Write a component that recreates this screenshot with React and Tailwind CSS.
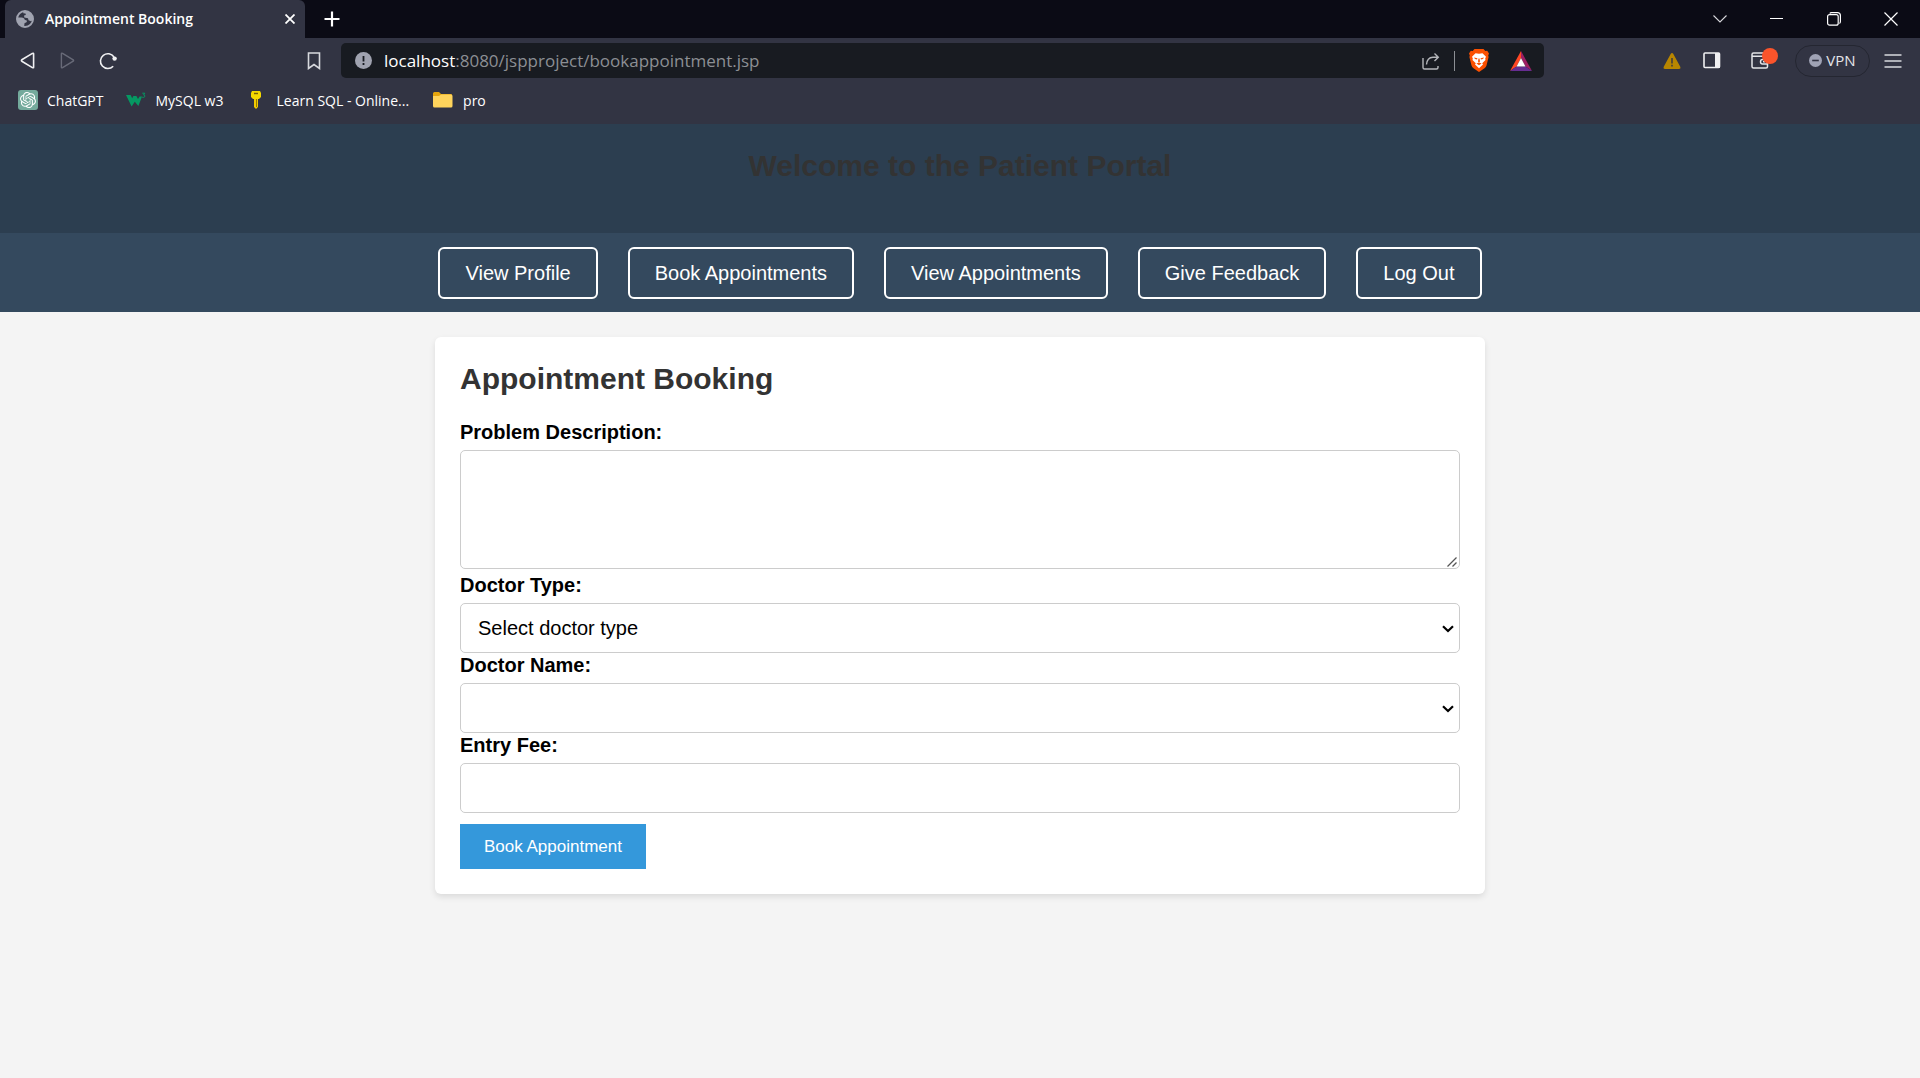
import React from "react";
import { SiOpenai } from "react-icons/si";

const navItems = ["View Profile", "Book Appointments", "View Appointments", "Give Feedback", "Log Out"];
const iconButton = "flex h-8 w-8 shrink-0 items-center justify-center";
const field = "block w-full rounded-[5px] border border-[#cccccc] bg-white px-[17px] text-[20px] text-black";
const label = "mb-1.5 block text-[20px] leading-6 font-bold text-black";

function Globe() {
  return (
    <svg width="18" height="18" viewBox="0 0 18 18" className="shrink-0">
      <circle cx="9" cy="9" r="8" fill="#323443" stroke="#a0a3b0" strokeWidth="2" />
      <path d="M1.2 7.5H5.5Q8.5 7.5 8.8 10L10.5 10.2Q11.5 11.5 10.2 12.6L8.6 13 8 17A8 8 0 0 1 1.2 8ZM7.5 1.2 14 2.3 16.8 6.5 16.9 10 15 11.2 12.5 10.2 12 8.2 8.3 7.6 8 5.6 9.8 5 9.5 3.6 7.2 3.2Z" fill="#a0a3b0" />
    </svg>
  );
}

function TabStrip() {
  return (
    <div className="flex h-[38px] bg-[#0b0b15] pl-[5px] text-white">
      <div className="flex w-[300px] items-center rounded-t-[6px] bg-[#323443] pr-1.5 pb-px pl-[11px]">
        <Globe />
        <span className="ml-[11px] grow text-[14px] font-semibold whitespace-nowrap">Appointment Booking</span>
        <button aria-label="Close tab" className="flex h-6 w-[18px] items-center justify-center">
          <svg width="10" height="10" viewBox="0 0 10 10" stroke="white" strokeWidth="1.8"><path d="M0.5 0.5 9.5 9.5M9.5 0.5 0.5 9.5" /></svg>
        </button>
      </div>
      <button aria-label="New tab" className="ml-[11px] flex w-8 items-center justify-center pb-px">
        <svg width="16" height="16" viewBox="0 0 16 16" stroke="white" strokeWidth="2.2"><path d="M8 0.5V15.5M0.5 8H15.5" /></svg>
      </button>
      <div className="ml-auto flex pr-px pb-px">
        <button aria-label="Search tabs" className="flex w-[57px] items-center justify-center">
          <svg width="14" height="8" viewBox="0 0 14 8" fill="none" stroke="#d8d8dc" strokeWidth="1.1"><path d="M0.5 0.5 7 7 13.5 0.5" /></svg>
        </button>
        <button aria-label="Minimize" className="flex w-[57px] items-center justify-center"><span className="h-px w-[13px] bg-white" /></button>
        <button aria-label="Restore" className="flex w-[57px] items-center justify-center">
          <svg width="14" height="14" viewBox="0 0 14 14" fill="none" stroke="white" strokeWidth="1.2"><rect x="0.6" y="2.6" width="10.6" height="10.6" rx="2" /><path d="M2.8 1.4Q3.2 0.6 4.5 0.6H10.4Q13.4 0.6 13.4 3.6V9.5Q13.4 11 12.4 11.5" /></svg>
        </button>
        <button aria-label="Close" className="flex w-[57px] items-center justify-center">
          <svg width="14" height="14" viewBox="0 0 14 14" stroke="white" strokeWidth="1.2"><path d="M0.5 0.5 13.5 13.5M13.5 0.5 0.5 13.5" /></svg>
        </button>
      </div>
    </div>
  );
}

function Lion() {
  return (
    <svg width="20" height="23" viewBox="0 0 20 23">
      <path d="M5.5 0H14.5L16.3 2 18.2 1.8 20 4.5 19.2 6.5 19.6 8 17.5 16.5Q17 18.2 15.5 19.3L10.8 22.6Q10 23.2 9.2 22.6L4.5 19.3Q3 18.2 2.5 16.5L.4 8 .8 6.5 0 4.5 1.8 1.8 3.7 2Z" fill="#fb5000" />
      <path d="M6.5 4.2 10 4.8 13.5 4.2 17 7.8 16.2 9.5 16.5 11 13.2 14.2 14 15.6 10 19.2 6 15.6 6.8 14.2 3.5 11 3.8 9.5 3 7.8Z" fill="white" />
      <path d="M5 8.4 8.5 9.2 8 10.4 6 9.9ZM15 8.4 11.5 9.2 12 10.4 14 9.9ZM9.5 9.5H10.5L11 12.5 10 13.5 9 12.5ZM7.4 14.6 10 13.6 12.6 14.6 10 16.2Z" fill="#fb5000" />
    </svg>
  );
}

function Toolbar() {
  return (
    <div className="flex h-[45px] items-center pr-[18px] pl-[11px]">
      <button aria-label="Back" className={iconButton}>
        <svg width="15" height="17" viewBox="0 0 15 17" fill="none" stroke="#f0f0f2" strokeWidth="1.6" strokeLinejoin="round"><path d="M13.6 1.8V15.2Q13.6 16.2 12.4 15.6L1.8 9.2Q1 8.5 1.8 7.8L12.4 1.4Q13.6 0.8 13.6 1.8Z" /></svg>
      </button>
      <button aria-label="Forward" className="ml-2 flex h-8 w-8 shrink-0 items-center justify-center">
        <svg width="15" height="17" viewBox="0 0 15 17" fill="none" stroke="#686a78" strokeWidth="1.4" strokeLinejoin="round"><path d="M1.4 1.8V15.2Q1.4 16.2 2.6 15.6L13.2 9.2Q14 8.5 13.2 7.8L2.6 1.4Q1.4 0.8 1.4 1.8Z" /></svg>
      </button>
      <button aria-label="Reload" className="ml-[9px] flex h-8 w-8 shrink-0 items-center justify-center">
        <svg width="18" height="18" viewBox="0 0 18 18" fill="none" stroke="#f0f0f2" strokeWidth="1.6"><path d="M14.2 14.2A7.4 7.4 0 1 1 15 5" /><circle cx="15.6" cy="6.6" r="2.2" fill="#f0f0f2" stroke="none" /></svg>
      </button>
      <button aria-label="Bookmark" className="ml-[174px] flex h-8 w-8 shrink-0 items-center justify-center">
        <svg width="14" height="18" viewBox="0 0 14 18" fill="none" stroke="#d8d9de" strokeWidth="1.6"><path d="M1.5 1H12.5V16.5L7 12.5 1.5 16.5Z" /></svg>
      </button>
      <div className="ml-[11px] flex h-[35px] w-[1203px] min-w-0 items-center rounded-[5px] bg-[#181b21] pr-3 pl-3.5">
        <svg width="17" height="17" viewBox="0 0 17 17" className="shrink-0"><circle cx="8.5" cy="8.5" r="8.5" fill="#a0a3b0" /><path d="M8.5 4V9.5M8.5 11V13" stroke="#181b21" strokeWidth="1.8" /></svg>
        <span className="ml-3 grow truncate text-[17px] text-[#8c8f94]"><span className="text-white">localhost</span>:8080/jspproject/bookappointment.jsp</span>
        <button aria-label="Share" className="shrink-0">
          <svg width="18" height="18" viewBox="0 0 18 18" fill="none" stroke="#b4b6ba" strokeWidth="1.4"><path d="M1 6V15.5Q1 17 2.5 17H14.5Q16 17 16 15.5V14M4.5 12.5Q5 5.5 11 5.2H16M12.5 1.5 16.3 5.2 12.5 9" /></svg>
        </button>
        <span className="ml-3.5 h-5 w-px shrink-0 bg-[#8c8f94]" />
        <button aria-label="Brave Shields" className="ml-3.5 shrink-0"><Lion /></button>
        <button aria-label="Rewards" className="ml-[21px] shrink-0">
          <svg width="22" height="20" viewBox="0 0 22 20"><path d="M11 0 0 20 6.5 15.5 11 7Z" fill="#ff4724" /><path d="M11 0 22 20 15.5 15.5 11 7Z" fill="#9e1f63" /><path d="M0 20H22L15.5 15.5H6.5Z" fill="#662d91" /><path d="M11 7 15.5 15.5H6.5Z" fill="white" /></svg>
        </button>
      </div>
      <div className="ml-auto flex shrink-0 items-center">
        <svg width="18" height="16" viewBox="0 0 18 16"><path d="M9 0Q9.8 0 10.2 .8L17.4 14Q18 16 16 16H2Q0 16 .6 14L7.8 .8Q8.2 0 9 0Z" fill="#b88600" /><path d="M9 5V10.5M9 11.8V13.5" stroke="#323443" strokeWidth="1.4" /></svg>
        <button aria-label="Sidebar" className="ml-[22px]">
          <svg width="18" height="17" viewBox="0 0 18 17"><rect x="1" y="1" width="15.5" height="14.5" rx="1" fill="none" stroke="#f0f0f2" strokeWidth="1.6" /><path d="M12 1H17V16H12Z" fill="#f0f0f2" /></svg>
        </button>
        <button aria-label="Wallet" className="relative mr-2 ml-[30px]">
          <svg width="18" height="17" viewBox="0 0 18 17" fill="none" stroke="#e4e5e9" strokeWidth="1.5"><path d="M16.5 4.5V2.5Q16.5 1 15 1H2.5Q1 1 1 2.5V14.5Q1 16 2.5 16H15Q16.5 16 16.5 14.5V12M1 4.2H14.5Q16.5 4.5 16.5 6V12H11.5Q9.5 12 9.5 9.7 9.5 7.5 11.5 7.5H16.5" /><path d="M12 9.8H14" /></svg>
          <span className="absolute -top-1 left-[11px] h-4 w-4 rounded-full bg-[#fb542b]" />
        </button>
        <button className="ml-[18px] flex h-8 w-[75px] items-center justify-center gap-1 rounded-full border border-[#242631] text-[15px] text-[#e4e5e9]">
          <svg width="13" height="13" viewBox="0 0 13 13"><circle cx="6.5" cy="6.5" r="6.5" fill="#a0a3b5" /><path d="M3.2 6.5H9.8" stroke="#323443" strokeWidth="1.6" /></svg>
          VPN
        </button>
        <button aria-label="Menu" className="ml-3.5">
          <svg width="18" height="14" viewBox="0 0 18 14" stroke="#d8d9de" strokeWidth="1.4"><path d="M0.5 1H17.5M0.5 7H17.5M0.5 13H17.5" /></svg>
        </button>
      </div>
    </div>
  );
}

function Bookmarks() {
  return (
    <div className="flex h-[41px] items-center pb-[7px] pl-[18px] text-[14px] whitespace-nowrap text-white">
      <a href="#chatgpt" className="flex items-center gap-[9px]">
        <span className="flex h-5 w-5 items-center justify-center rounded-[3px] bg-[#74aa9c]"><SiOpenai className="h-4 w-4" /></span>ChatGPT
      </a>
      <a href="#mysql" className="ml-[22px] flex items-center gap-2.5">
        <svg width="20" height="16" viewBox="0 0 20 16"><path d="M0 3H4.6L6.2 6.2 7.4 4H10.4L12 7 13.6 4.4H16L12.4 14 8.8 9.8 5.6 14.5Z" fill="#059862" /><path d="M16.3 1.2H18.8L17.6 3Q19.2 3 18.8 4.6 18 6 16.2 5.2" stroke="#059862" fill="none" strokeWidth="1" /></svg>
        MySQL w3
      </a>
      <a href="#sql" className="ml-7 flex items-center gap-[15px]">
        <svg width="10" height="18" viewBox="0 0 10 18"><path d="M1 0H9L10 2V6L8 8H2L0 6V2Z" fill="#f5d800" /><path d="M3 8H7V16L5 18 3 16Z" fill="#f2cb00" /><path d="M3 2.5H7" stroke="#77600a" strokeWidth="1.4" /><path d="M5.5 8V16" stroke="#967a00" /></svg>
        Learn SQL - Online...
      </a>
      <a href="#pro" className="ml-6 flex items-center gap-2.5">
        <svg width="20" height="16" viewBox="0 0 20 16"><path d="M0 1.5Q0 0 1.5 0H6L8 2H18Q19 2 19 3V14H0Z" fill="#e5a50d" /><path d="M0 4H6L8 2.5H18Q19.5 2.5 19.5 4V14Q19.5 15.5 18 15.5H1.5Q0 15.5 0 14Z" fill="#ffd45c" /></svg>
        pro
      </a>
    </div>
  );
}

function SelectField({ id, options }) {
  return (
    <div className="relative">
      <select id={id} className={`${field} h-[50px] appearance-none`}>
        {options.map((option) => <option key={option}>{option}</option>)}
      </select>
      <svg width="12" height="8" viewBox="0 0 12 8" fill="none" stroke="black" strokeWidth="2.2" className="pointer-events-none absolute top-[22px] right-1.5"><path d="M1 1.2 6 6 11 1.2" /></svg>
    </div>
  );
}

export default function App() {
  return (
    <div className="min-h-screen bg-[#f4f4f4] font-['Liberation_Sans',Arial,sans-serif]">
      <div className="bg-[#323443] font-['Open_Sans','Noto_Sans',sans-serif]">
        <TabStrip />
        <Toolbar />
        <Bookmarks />
      </div>
      <header className="bg-[#2c3e50] pt-[25px] pb-[50px] text-center">
        <h1 className="text-[30px] leading-[34px] font-bold text-[#333333]">Welcome to the Patient Portal</h1>
      </header>
      <nav className="flex justify-center gap-[30px] bg-[#34495e] pt-3.5 pb-[13px]">
        {navItems.map((item) => (
          <a key={item} href="#nav" className="flex h-[52px] items-center rounded-[6px] border-2 border-white px-[25px] text-[20px] whitespace-nowrap text-white">{item}</a>
        ))}
      </nav>
      <main className="mx-auto mt-[25px] max-w-[1050px] rounded-[6px] bg-white p-[25px] shadow-[0_3px_6px_rgba(0,0,0,0.1)]">
        <h2 className="mb-6 text-[30px] leading-[34px] font-bold text-[#333333]">Appointment Booking</h2>
        <form onSubmit={(e) => e.preventDefault()}>
          <label className={label} htmlFor="problem">Problem Description:</label>
          <div className="relative mb-1">
            <textarea id="problem" className={`${field} h-[119px] resize-none py-3`} />
            <svg width="10" height="10" viewBox="0 0 10 10" stroke="#555555" strokeWidth="1.3" className="pointer-events-none absolute right-[3px] bottom-0.5"><path d="M0.5 9.5 9.5 0.5M5.5 9.5 9.5 5.5" /></svg>
          </div>
          <label className={label} htmlFor="type">Doctor Type:</label>
          <SelectField id="type" options={["Select doctor type"]} />
          <label className={label} htmlFor="name">Doctor Name:</label>
          <SelectField id="name" options={[]} />
          <label className={label} htmlFor="fee">Entry Fee:</label>
          <input id="fee" type="text" className={`${field} h-[50px]`} />
          <button type="submit" className="mt-[11px] h-[45px] bg-[#3498db] px-6 text-[17px] text-white">Book Appointment</button>
        </form>
      </main>
    </div>
  );
}
